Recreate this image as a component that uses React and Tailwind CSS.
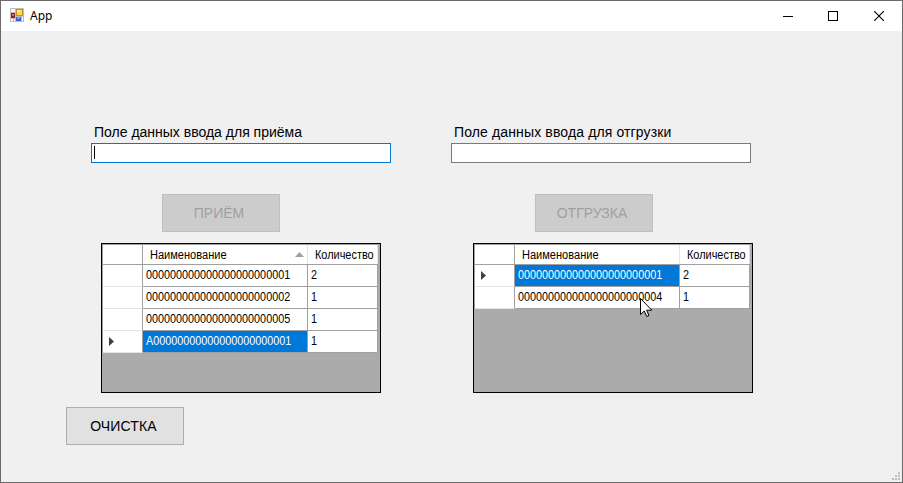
function AppIcon() {
  return (
    <svg width="14" height="14" viewBox="0 0 14 14" shapeRendering="crispEdges">
      <rect width="14" height="14" fill="#bdbdbd" />
      <rect x="1" y="1" width="4" height="3" fill="#fff" />
      <rect x="1" y="11" width="2" height="2" fill="#fff" />
      <rect x="4" y="11" width="1" height="2" fill="#fff" />
      <rect x="12" y="9" width="1" height="4" fill="#fff" />
      <rect x="1" y="5" width="4" height="5" fill="#a01c1c" />
      <rect x="2" y="6" width="2" height="2" fill="#d9665c" />
      <rect x="6" y="1" width="7" height="7" fill="#c8940c" />
      <rect x="7" y="2" width="5" height="5" fill="#fdd65c" />
      <rect x="7" y="2" width="3" height="2" fill="#ffeaa0" />
      <rect x="6" y="9" width="5" height="4" fill="#2f66cc" />
      <rect x="7" y="9" width="3" height="2" fill="#6f9df0" />
    </svg>
  );
}

function TitleBar() {
  return (
    <header className="flex h-[30px] shrink-0 items-start bg-white">
      <div className="flex pt-[7px] pl-[9px]">
        <AppIcon />
        <span className="ml-[6px] text-[12px] leading-[16px] font-['Noto_Sans',sans-serif]">App</span>
      </div>
      <div className="ml-auto flex">
        <button className="flex h-[29px] w-[45px] items-center justify-center">
          <svg width="10" height="10" shapeRendering="crispEdges"><rect y="5" width="10" height="1" /></svg>
        </button>
        <button className="flex h-[29px] w-[45px] items-center justify-center">
          <svg width="10" height="10" shapeRendering="crispEdges"><rect x=".5" y=".5" width="9" height="9" fill="none" stroke="#000" /></svg>
        </button>
        <button className="flex h-[29px] w-[47px] items-center justify-center">
          <svg width="10" height="10"><path d="M0 0 10 10M10 0 0 10" stroke="#000" strokeWidth="1.1" /></svg>
        </button>
      </div>
    </header>
  );
}

function Field({ label, focused }) {
  return (
    <label className="flex w-[300px] flex-col">
      <span className={focused ? "h-[20px] pl-[3px] text-[14px] leading-[18px] whitespace-nowrap" : "h-[20px] pl-[3px] text-[14px] leading-[18px] tracking-[0.13px] whitespace-nowrap"}>
        {label}
      </span>
      <span className={focused ? "flex h-[20px] border border-[#0078d7] bg-white pt-[2px] pl-[2px]" : "flex h-[20px] border border-[#7a7a7a] bg-white"}>
        {focused && <i className="h-[13px] w-px bg-black" />}
      </span>
    </label>
  );
}

function Button({ children, disabled }) {
  return (
    <button
      className={
        disabled
          ? "h-[38px] w-[118px] border border-[#bfbfbf] bg-[#cccccc] pr-[4px] text-[14px] text-[#a0a0a0]"
          : "h-[38px] w-[118px] border border-[#adadad] bg-[#e1e1e1] pr-[3px] text-[14px] tracking-[0.15px] text-black"
      }
    >
      {children}
    </button>
  );
}

function DataGrid({ rows, selected, sorted }) {
  return (
    <section className="h-[150px] w-[280px] border border-black bg-[#ababab] text-[12px]">
      <div className="w-[276px] border-t border-l border-[#a0a0a0]">
        <div className="flex h-[20px] border-b border-[#a0a0a0] bg-white leading-[20px]">
          <div className="w-[40px] border-r border-[#a0a0a0]" />
          <div className="flex w-[165px] items-center border-r border-[#e5e5e5] pl-[7px]">
            <span className="inline-block origin-left scale-x-[.92]">Наименование</span>
            {sorted && (
              <svg className="mr-[3px] ml-auto" width="9" height="5"><path d="M4.5 0 9 5H0Z" fill="#a0a0a0" /></svg>
            )}
          </div>
          <div className="w-[70px] border-r border-[#e5e5e5] pl-[7px] whitespace-nowrap">
            <span className="inline-block origin-left scale-x-[.91]">Количество</span>
          </div>
        </div>
        {rows.map(([name, count], i) => (
          <div key={name} className="flex h-[22px] bg-white leading-[21px]">
            <div className="flex w-[40px] items-center border-r border-b border-r-[#a0a0a0] border-b-[#e5e5e5] pl-[6px]">
              {i === selected && <svg width="5" height="9"><path d="M0 0 5 4.5 0 9Z" fill="#404040" /></svg>}
            </div>
            <div className={i === selected ? "w-[165px] border-r border-b border-[#a0a0a0] bg-[#0078d7] pl-[3px] text-white" : "w-[165px] border-r border-b border-[#a0a0a0] pl-[3px]"}>
              <span className="inline-block origin-left scale-x-90">{name}</span>
            </div>
            <div className="w-[70px] border-r border-b border-[#a0a0a0] pl-[3px]">
              <span className="inline-block origin-left scale-x-90">{count}</span>
            </div>
          </div>
        ))}
      </div>
    </section>
  );
}

const received = [
  ["000000000000000000000001", 2],
  ["000000000000000000000002", 1],
  ["000000000000000000000005", 1],
  ["A00000000000000000000001", 1],
];
const shipped = [
  ["000000000000000000000001", 2],
  ["000000000000000000000004", 1],
];

export default function App() {
  return (
    <div className="relative flex h-[483px] w-[903px] flex-col overflow-hidden border border-[#6b6b6b] bg-[#f0f0f0] font-['Liberation_Sans',Arial,sans-serif] text-black">
      <TitleBar />
      <main className="flex flex-col">
        <div className="flex gap-[60px] pt-[92px] pl-[90px]">
          <Field label="Поле данных ввода для приёма" focused />
          <Field label="Поле данных ввода для отгрузки" />
        </div>
        <div className="mt-[31px] flex gap-[255px] pl-[161px]">
          <Button disabled>ПРИЁМ</Button>
          <Button disabled>ОТГРУЗКА</Button>
        </div>
        <div className="mt-[11px] flex gap-[92px] pl-[100px]">
          <DataGrid rows={received} selected={3} sorted />
          <DataGrid rows={shipped} selected={0} />
        </div>
        <div className="mt-[14px] flex pl-[65px]">
          <Button>ОЧИСТКА</Button>
        </div>
      </main>
      <svg className="absolute top-[297px] left-[639px]" width="13" height="20" viewBox="0 0 13 20">
        <path d="M.5.5V16.5L4.2 13 6.8 18.5 9 17.5 6.6 12.2H11.8Z" fill="#fff" stroke="#000" strokeWidth="1" />
      </svg>
      <svg className="absolute right-[2px] bottom-[2px]" width="8" height="8" fill="#bfbfbf" shapeRendering="crispEdges">
        <path d="M6 0h2v2H6zM3 3h2v2H3zM6 3h2v2H6zM0 6h2v2H0zM3 6h2v2H3zM6 6h2v2H6z" />
      </svg>
      <i className="absolute -bottom-px left-[33px] h-px w-[6px] bg-[#2f5f80]" />
      <i className="absolute -top-px left-[249px] h-px w-[8px] bg-[#2c4a5c]" />
      <i className="absolute -top-px left-[684px] h-px w-[16px] bg-[#7d6a3a]" />
    </div>
  );
}
